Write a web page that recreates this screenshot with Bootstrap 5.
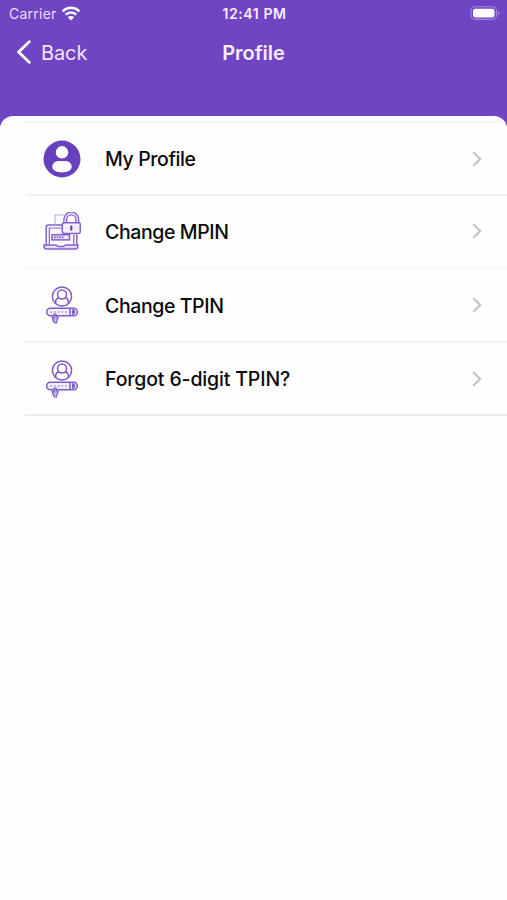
<!DOCTYPE html>
<html lang="en">
<head>
<meta charset="utf-8">
<meta name="viewport" content="width=device-width, initial-scale=1">
<title>Profile</title>
<link href="https://cdn.jsdelivr.net/npm/bootstrap@5.3.0/dist/css/bootstrap.min.css" rel="stylesheet">
<style>
:root { --brand: #6f45c4; }
body { font-family: Inter, "Liberation Sans", sans-serif; background: #fefefe; min-height: 900px; }
svg { display: block; flex: none; }
.app-head { background: var(--brand); height: 126px; color: #f8edff; }
.status-bar { height: 27px; padding: 0 6px 0 9px; font-size: 14px; }
.status-bar .side { flex: 1 1 0; }
.carrier { letter-spacing: .25px; color: #eadcff; }
.clock { font-size: 14px; letter-spacing: .6px; margin-right: 1px; }
.title-bar { height: 50px; font-size: 20px; padding: 0 16px; }
.title-bar .side { flex: 1 1 0; }
.title-bar span { padding-top: 1px; }
.back-link { color: #f3e4ff; gap: 10px; letter-spacing: -.1px; }
.sheet { background: #fefefe; border-radius: 13px 13px 0 0; margin-top: -10.5px; padding-top: 5.5px; overflow: hidden; }
.menu-list { margin-left: 25px; border-top: 2px solid #f5f5f6; }
.menu-list .menu-item { height: 73.3px; padding: 0 25px 0 18px; border: 0; border-bottom: 2px solid #f0f0f1; background: transparent; color: #0b0b0b; font-size: 19.5px; font-weight: 500; letter-spacing: -.4px; }
.menu-list .menu-item.faint { border-bottom: 3px solid #f7f7f7; }
.menu-list .menu-item:last-child { border-bottom: 2px solid #ededee; letter-spacing: -.15px; }
.menu-item .label { margin-left: 24px; padding-top: 2px; }
</style>
</head>
<body>
<svg width="0" height="0" class="position-absolute" aria-hidden="true">
  <defs>
    <symbol id="pin-icon" viewBox="0 0 38 38">
      <g fill="none" stroke="#7e5bc9" stroke-width="1.500">
        <circle cx="19" cy="10.500" r="9.600"/>
        <circle cx="19" cy="8.500" r="4.500"/>
        <path d="M12.700 17.600v-1.800c0-2.300 1.400-3.600 3.500-4M25.300 17.600v-1.800c0-2.300-1.400-3.600-3.500-4"/>
        <rect x="3.700" y="22.300" width="30.600" height="7.400" rx="3.700" fill="#f3eefb"/>
        <path d="M27 22.300v7.400M29.800 24v4c2.300-.2 2.300-3.800 0-4z"/>
        <path d="M7.500 26h17.500" stroke-width="1.500" stroke-dasharray="1.500 2.200" stroke="#a48bd9"/>
        <path d="M11 28v3.800l-1.800-.3.800 2.900 1.500 2.600h2l.5-2.700 1.200-3-2.200-.8V28z" fill="#c4b3e8" stroke-width="1.200"/>
      </g>
    </symbol>
    <symbol id="chevron-icon" viewBox="0 0 10 16">
      <path d="M1.200 1.300 8.200 8l-7 6.700" fill="none" stroke="#c2c2c4" stroke-width="2.100"/>
    </symbol>
  </defs>
</svg>

<header class="app-head">
  <div class="status-bar d-flex align-items-center">
    <div class="side d-flex align-items-center">
      <span class="carrier">Carrier</span>
      <svg class="ms-1" width="20" height="15" viewBox="0 0 20 15">
        <g fill="none" stroke="#fff" stroke-width="2.500">
          <path d="M1.600 5.300a12 12 0 0 1 16.800 0"/>
          <path d="M4.700 8.700a7.600 7.600 0 0 1 10.600 0"/>
        </g>
        <path d="M10 14.500l3.200-3.300a4.600 4.600 0 0 0-6.400 0z" fill="#fff"/>
      </svg>
    </div>
    <span class="clock fw-semibold">12:41 PM</span>
    <div class="side d-flex justify-content-end">
      <svg width="31" height="15" viewBox="0 0 31 15">
        <rect x="1" y=".8" width="25.500" height="12.600" rx="4" fill="none" stroke="#a688dd" stroke-width="1.100"/>
        <rect x="3" y="2.700" width="21.500" height="8.800" rx="2.200" fill="#fff"/>
        <path d="M28 4.900v4.400c2-.9 2-3.500 0-4.400z" fill="#a688dd"/>
      </svg>
    </div>
  </div>
  <div class="title-bar d-flex align-items-center">
    <div class="side d-flex">
      <a href="#" class="back-link d-flex align-items-center text-decoration-none">
        <svg width="15" height="24" viewBox="0 0 15 24"><path d="M13.300 1.700 2.600 12l10.700 10.300" fill="none" stroke="#fff" stroke-width="2.800" stroke-linecap="round" stroke-linejoin="round"/></svg>
        <span>Back</span>
      </a>
    </div>
    <span class="fw-semibold">Profile</span>
    <div class="side"></div>
  </div>
</header>

<main class="sheet">
  <nav class="menu-list list-group list-group-flush rounded-0">
    <a href="#" class="menu-item list-group-item d-flex align-items-center">
      <svg width="38" height="38" viewBox="0 0 38 38">
        <circle cx="19" cy="19" r="18.500" fill="#6640bd"/>
        <circle cx="19" cy="12.300" r="6.200" fill="#fff"/>
        <path d="M9.300 26.800c0-3.500 3-5.800 6.500-5.800h6.400c3.500 0 6.500 2.300 6.500 5.800 0 4-5 5.700-9.700 5.700s-9.700-1.700-9.700-5.700z" fill="#fff"/>
      </svg>
      <span class="label">My Profile</span>
      <svg class="ms-auto" width="10" height="16"><use href="#chevron-icon"/></svg>
    </a>
    <a href="#" class="menu-item list-group-item d-flex align-items-center faint">
      <svg width="38" height="38" viewBox="0 0 38 38">
        <g fill="none" stroke="#8460cc" stroke-width="1.500">
          <path d="M12 12V3h8.500" stroke="#b9a6e2" stroke-width="1.100"/>
          <path d="M19.500 13H5.600c-1.500 0-2.400.9-2.400 2.400V33M33.800 22.500V33"/>
          <path d="M19.500 16H6.300v17M30.800 22.500V33" stroke-width="1.200"/>
          <path d="M1 33h12l2 1.500h5.500l2-1.500h12.300v1.200c0 1.500-1 2.700-2.500 2.700H3.500C2 36.900 1 35.700 1 34.200z" fill="#e7def6"/>
          <rect x="9" y="22.700" width="17.500" height="5.200" fill="#efe9f9"/>
          <path d="M11 25.300h9.500" stroke-dasharray="1.700 1" stroke-width="2"/>
          <path d="M22.300 11V7.500a6 6 0 0 1 12 0V11" stroke-width="4.200" stroke="#8b69cf"/>
          <path d="M22.300 11V7.500a6 6 0 0 1 12 0V11" stroke-width="1.300" stroke="#eee8f9"/>
          <rect x="19.300" y="10.700" width="18" height="10.800" rx="1.800" fill="#f4effb"/>
          <path d="M28.300 14.700v3" stroke="#6640bd" stroke-width="2.200" stroke-linecap="round"/>
        </g>
      </svg>
      <span class="label">Change MPIN</span>
      <svg class="ms-auto" width="10" height="16"><use href="#chevron-icon"/></svg>
    </a>
    <a href="#" class="menu-item list-group-item d-flex align-items-center">
      <svg width="38" height="38"><use href="#pin-icon"/></svg>
      <span class="label">Change TPIN</span>
      <svg class="ms-auto" width="10" height="16"><use href="#chevron-icon"/></svg>
    </a>
    <a href="#" class="menu-item list-group-item d-flex align-items-center">
      <svg width="38" height="38"><use href="#pin-icon"/></svg>
      <span class="label">Forgot 6-digit TPIN?</span>
      <svg class="ms-auto" width="10" height="16"><use href="#chevron-icon"/></svg>
    </a>
  </nav>
</main>
<script src="https://cdn.jsdelivr.net/npm/bootstrap@5.3.0/dist/js/bootstrap.bundle.min.js"></script>
</body>
</html>
